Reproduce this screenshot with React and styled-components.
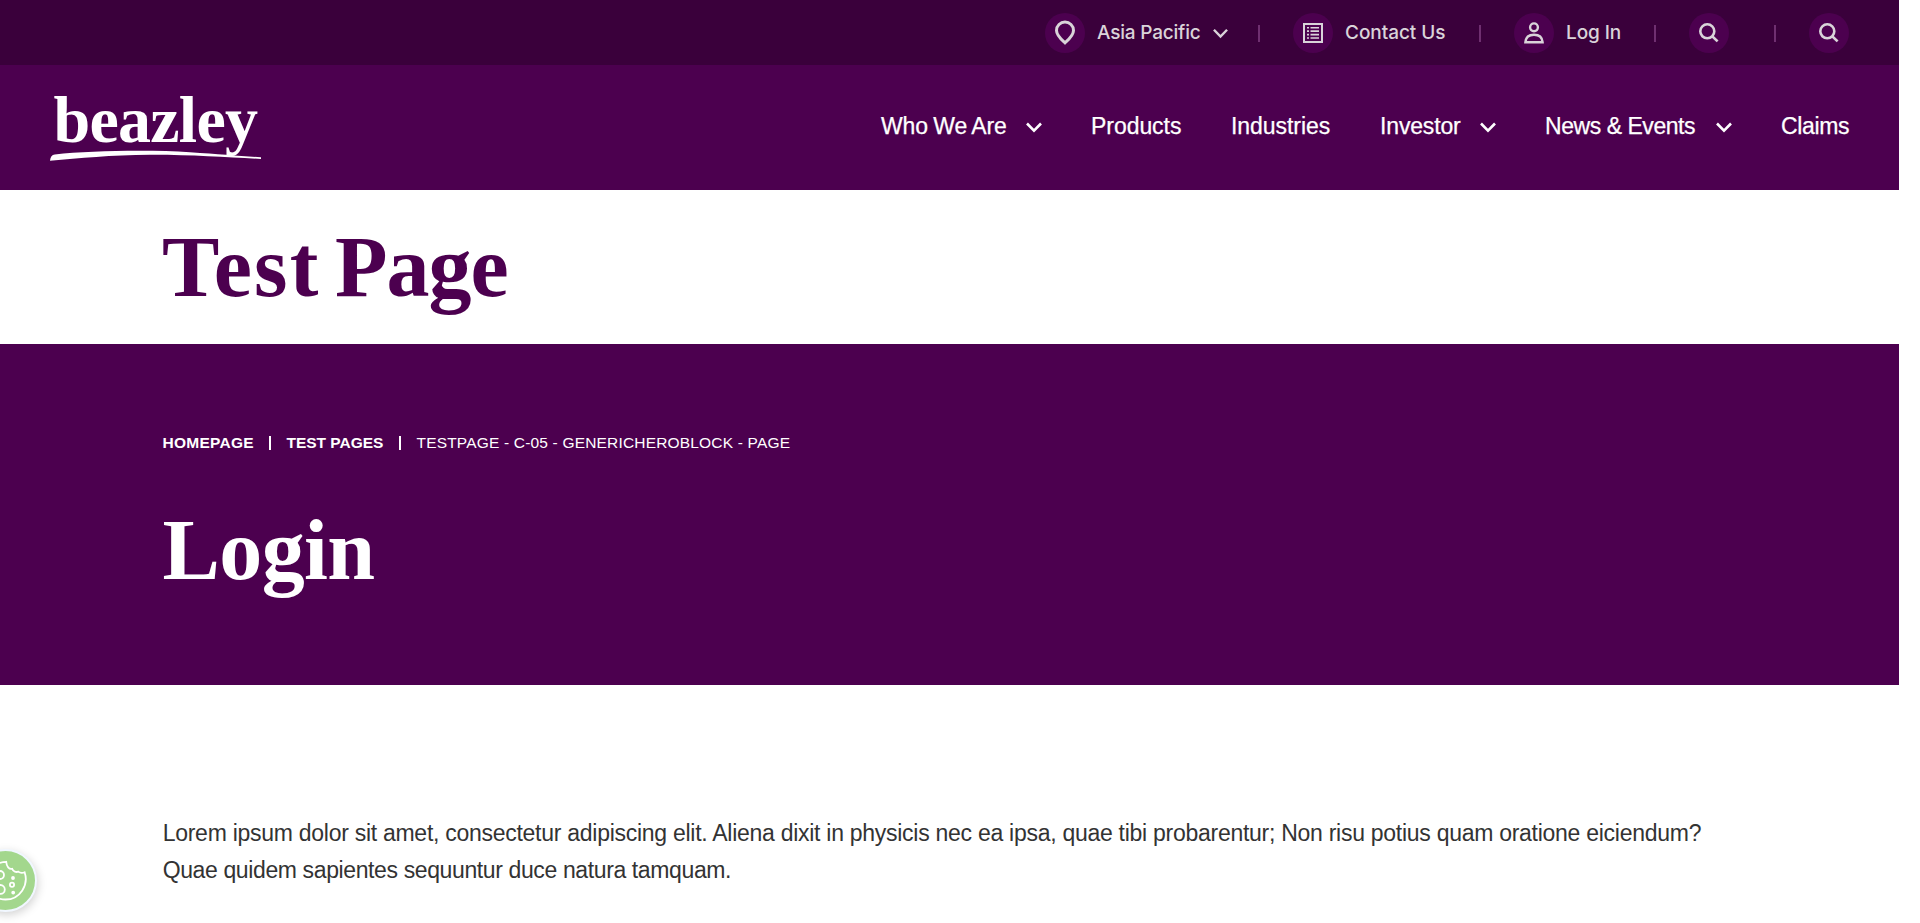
import React from 'react';
import styled, { createGlobalStyle } from 'styled-components';

const PLUM = '#4c004f';
const DARK = '#3a003b';
const SANS = '"Liberation Sans", Arial, sans-serif';
const SERIF = '"Liberation Serif", "Times New Roman", serif';

const GlobalStyle = createGlobalStyle`
  *, *::before, *::after { box-sizing: border-box; }
  html { background: #fff; overflow: hidden; }
  body { margin: 0; font-family: ${SANS}; color: #333; }
`;

const Page = styled.div`
  width: 1899px;
  height: 923px;
  overflow: hidden;
  position: relative;
  background: #fff;
`;

const UtilityBar = styled.div`
  height: 65px;
  padding-right: 50px;
  background: ${DARK};
  display: flex;
  align-items: center;
  justify-content: flex-end;
`;

const UtilityLink = styled.a`
  display: flex;
  align-items: center;
  gap: 12px;
  padding-top: 1px;
  color: #d9d3d9;
  font: 500 19px/24px Inter, sans-serif;
`;

const Label = styled.span`
  flex: none;
  width: ${p => p.$w}px;
  letter-spacing: ${p => p.$ls || 0}px;
  white-space: nowrap;
  padding-bottom: 1px;
`;

const IconDisc = styled.span`
  width: 40px;
  height: 40px;
  flex: none;
  border-radius: 50%;
  background: ${PLUM};
  display: grid;
  place-items: center;
  svg { display: block; }
`;

const Divider = styled.span`
  width: 2px;
  height: 17px;
  margin: 2px 33px 0 ${p => p.$left || 33}px;
  background: #6f2f70;
`;

const Masthead = styled.header`
  height: 125px;
  padding: 0 50px;
  background: ${PLUM};
  display: flex;
  justify-content: space-between;
  align-items: flex-start;
`;

const Logo = styled.svg`
  display: block;
  margin-top: 15px;
  overflow: visible;
`;

const Nav = styled.nav`
  display: flex;
  gap: 49px;
  padding-top: 49px;
`;

const NavItem = styled.a`
  display: flex;
  align-items: center;
  gap: 20px;
  height: 24px;
  color: #fff;
  font: 23px/24px ${SANS};
  word-spacing: ${p => p.$word || 0}px;
  -webkit-text-stroke: 0.25px #fff;
  svg { margin-top: 3px; }
`;

const NavLabel = styled.span`
  width: ${p => p.$w}px;
  padding-left: 0.5px;
  letter-spacing: ${p => p.$ls}px;
  white-space: nowrap;
`;

const TitleBand = styled.section`
  height: 154px;
  padding: 30px 0 0 162px;
`;

const Heading = styled.h1`
  margin: 0;
  font: bold 86px/95px ${SERIF};
  letter-spacing: ${p => p.$ls}px;
  word-spacing: -6px;
  color: ${p => p.$color};
`;

const Tracked = styled.span`
  letter-spacing: 2.2px;
`;

const Hero = styled.section`
  height: 341px;
  padding: 87px 0 0 162.5px;
  background: ${PLUM};
`;

const Crumbs = styled.div`
  display: flex;
  align-items: center;
  height: 24px;
  margin-bottom: 48px;
  color: #fff;
  font-size: 15.5px;
  line-height: 24px;
  white-space: nowrap;
`;

const Crumb = styled.span`
  width: ${p => p.$w}px;
  font-weight: ${p => (p.$current ? 400 : 700)};
  letter-spacing: ${p => p.$ls}px;
`;

const CrumbRule = styled.span`
  width: 2px;
  height: 14px;
  margin: 0 15.5px;
  background: #fff;
`;

const Copy = styled.p`
  margin: 0;
  padding: 130px 0 0 162.7px;
  color: #333;
  font-size: 23px;
  line-height: 37px;
  white-space: nowrap;
`;

const Line = styled.span`
  display: block;
  letter-spacing: ${p => p.$ls}px;
`;

const CookieButton = styled.button`
  position: absolute;
  left: -26px;
  top: 849px;
  width: 63px;
  height: 63px;
  padding: 0;
  border: 2px solid #f1f7ff;
  border-radius: 50%;
  background: #a3d78d;
  box-shadow: 1px 3px 10px rgba(0, 0, 0, 0.18);
  svg { display: block; }
`;

const Chevron = ({ width = 16, color = '#fff' }) => (
  <svg width={width} height="11" viewBox="0 0 16 11" fill="none" stroke={color} strokeWidth="2.6">
    <path d="M1 1.5 8 8.7 15 1.5" />
  </svg>
);

const INK = '#d9d3d9';

const PinIcon = () => (
  <svg width="22" height="26" viewBox="0 0 22 26" fill="none" stroke={INK} strokeWidth="3">
    <path d="M11 22.8C9.2 21 2.5 15.6 2.5 10.4A8.5 8.3 0 0 1 19.5 10.4C19.5 15.6 12.8 21 11 22.8Z" />
  </svg>
);

const ListIcon = () => (
  <svg width="20" height="20" viewBox="0 0 20 20" fill={INK}>
    <path fillRule="evenodd" d="M0 0H20V20H0ZM2 2V18H18V2Z" />
    <path d="M4 4h2v1.6H4zM7.5 4H16v1.6H7.5zM4 7.3h2v1.6H4zM7.5 7.3H16v1.6H7.5zM4 10.8h2v1.6H4zM7.5 10.8H16v1.6H7.5zM4 14.2h2v1.6H4zM7.5 14.2H16v1.6H7.5z" />
  </svg>
);

const UserIcon = () => (
  <svg width="20" height="22" viewBox="0 0 20 22" fill="none" stroke={INK} strokeWidth="2.4">
    <circle cx="10" cy="5.3" r="3.9" />
    <path d="M1.4 20.2C1.8 15.7 5 12.8 10 12.8S18.2 15.7 18.6 20.2Z" />
  </svg>
);

const SearchIcon = () => (
  <svg width="20" height="20" viewBox="0 0 20 20" fill="none" stroke={INK} strokeWidth="2.6">
    <circle cx="8.3" cy="8.3" r="7" />
    <path d="m13.2 13.2 5.4 5.2" />
  </svg>
);

const CookieIcon = () => (
  <svg width="59" height="59" viewBox="0 0 59 59" fill="none" stroke="#fff" strokeWidth="1.8">
    <path d="M30.2 10.8C30.6 15.6 33 18.5 36.2 17.8C37.3 20.6 40.2 21.6 42.2 20.6C44 22 46.8 22 48.6 21.2C53 34 44 48.5 29.5 48.5C18 48.5 10 39.5 10 30C10 19.5 19 11.2 30.2 10.8Z" />
    <circle cx="24" cy="24" r="4" />
    <circle cx="24.4" cy="38.4" r="4.4" />
    <circle cx="36" cy="33.8" r="2.1" />
    <circle cx="37" cy="27" r="1" fill="#fff" />
    <circle cx="37.2" cy="41.6" r="1" fill="#fff" />
  </svg>
);

export default function App() {
  return (
    <>
      <GlobalStyle />
      <Page>
        <UtilityBar>
          <UtilityLink>
            <IconDisc><PinIcon /></IconDisc>
            <Label $w={104} $ls={-0.2}>Asia Pacific</Label>
            <Chevron width={15} color={INK} />
          </UtilityLink>
          <Divider $left={30} />
          <UtilityLink>
            <IconDisc><ListIcon /></IconDisc>
            <Label $w={100} $ls={-0.05}>Contact Us</Label>
          </UtilityLink>
          <Divider $left={34} />
          <UtilityLink>
            <IconDisc><UserIcon /></IconDisc>
            <Label $w={55} $ls={-0.1}>Log In</Label>
          </UtilityLink>
          <Divider />
          <UtilityLink><IconDisc><SearchIcon /></IconDisc></UtilityLink>
          <Divider $left={45} />
          <UtilityLink><IconDisc><SearchIcon /></IconDisc></UtilityLink>
        </UtilityBar>

        <Masthead>
          <Logo width="212" height="92" viewBox="50 80 212 92" fill="#fff">
            <text x="53.5" y="142" fontFamily="Liberation Serif" fontWeight="700" fontSize="66" textLength="204.5" lengthAdjust="spacing">beazley</text>
            <path d="M50 160.8Q50.5 155 54.8 154.6C90 150.6 150 149.8 190 152.2C220 154 240 156 261 157.3V158.9C230 157.5 190 154.6 150 154.8C110 155 80 158.4 50 160.8Z" />
          </Logo>
          <Nav>
            <NavItem $word={-1}><NavLabel $w={125} $ls={-0.1}>Who We Are</NavLabel><Chevron /></NavItem>
            <NavItem><NavLabel $w={91} $ls={-0.05}>Products</NavLabel></NavItem>
            <NavItem><NavLabel $w={100} $ls={-0.05}>Industries</NavLabel></NavItem>
            <NavItem><NavLabel $w={80} $ls={-0.15}>Investor</NavLabel><Chevron /></NavItem>
            <NavItem><NavLabel $w={151} $ls={-0.45}>News &amp; Events</NavLabel><Chevron /></NavItem>
            <NavItem><NavLabel $w={68.5} $ls={-0.35}>Claims</NavLabel></NavItem>
          </Nav>
        </Masthead>

        <TitleBand>
          <Heading as="h2" $color={PLUM} $ls={-1}><Tracked>Test</Tracked> Page</Heading>
        </TitleBand>

        <Hero>
          <Crumbs>
            <Crumb $w={91} $ls={0.26}>HOMEPAGE</Crumb>
            <CrumbRule />
            <Crumb $w={97} $ls={-0.02}>TEST PAGES</Crumb>
            <CrumbRule />
            <Crumb $current $w={374} $ls={0.18}>TESTPAGE - C-05 - GENERICHEROBLOCK - PAGE</Crumb>
          </Crumbs>
          <Heading $color="#fff" $ls={-0.6}>Login</Heading>
        </Hero>

        <Copy>
          <Line $ls={-0.272}>Lorem ipsum dolor sit amet, consectetur adipiscing elit. Aliena dixit in physicis nec ea ipsa, quae tibi probarentur; Non risu potius quam oratione eiciendum?</Line>
          <Line $ls={-0.38}>Quae quidem sapientes sequuntur duce natura tamquam.</Line>
        </Copy>

        <CookieButton aria-label="Cookies"><CookieIcon /></CookieButton>
      </Page>
    </>
  );
}
